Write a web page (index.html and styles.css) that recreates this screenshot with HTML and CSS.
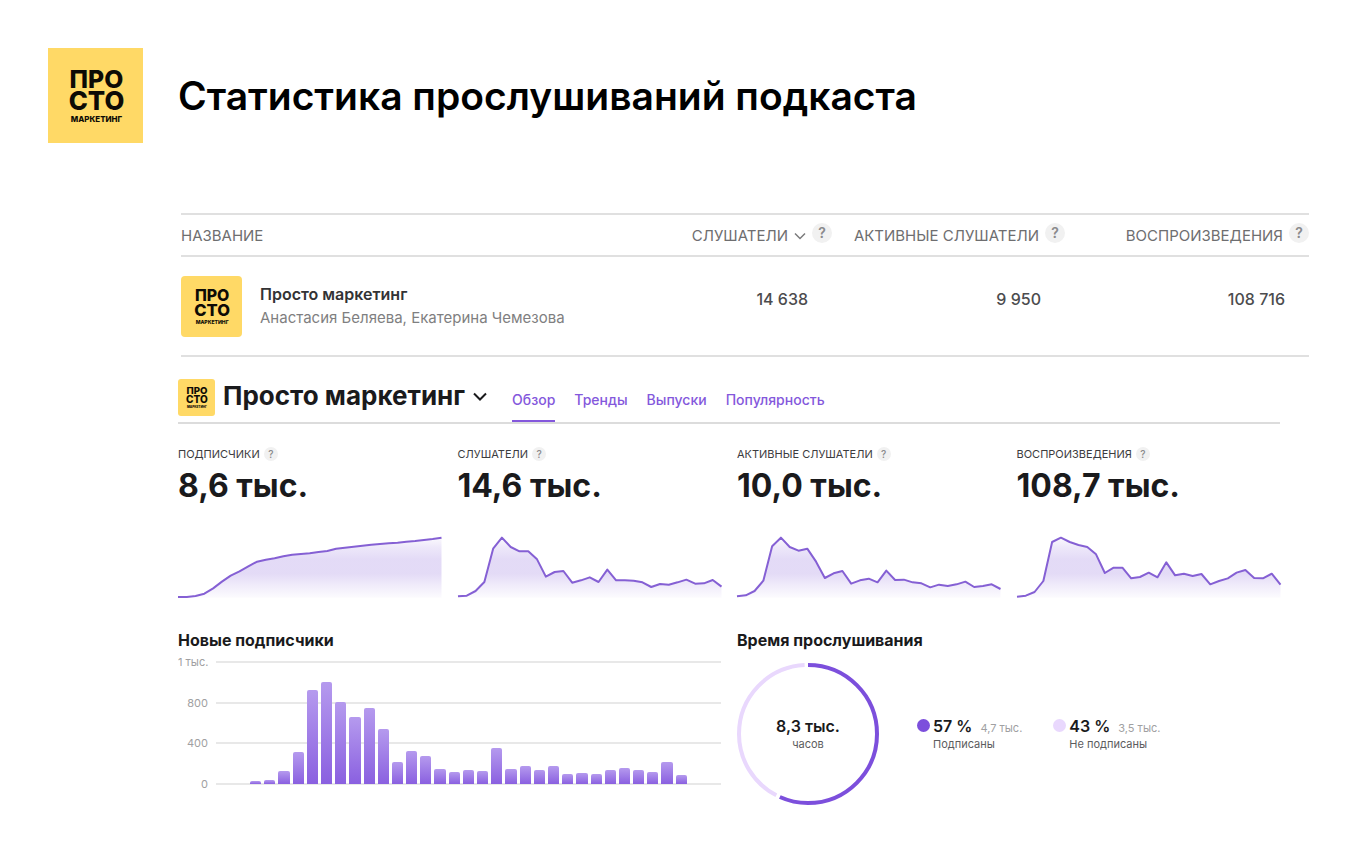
FILE: index.html
```html
<!DOCTYPE html>
<html lang="ru">
<head>
<meta charset="utf-8">
<meta name="viewport" content="width=device-width, initial-scale=1">
<title>Статистика прослушиваний подкаста</title>
<link rel="stylesheet" href="styles.css">
</head>
<body>
<svg class="defs" width="0" height="0" aria-hidden="true">
  <defs>
    <symbol id="cover" viewBox="0 0 96 96">
      <rect width="96" height="96" fill="#ffd966"/>
      <g class="cover-text" text-anchor="middle">
        <text x="49" y="40" font-size="25">ПРО</text>
        <text x="49" y="63" font-size="26">СТО</text>
        <text x="49" y="75" font-size="8">МАРКЕТИНГ</text>
      </g>
    </symbol>
    <linearGradient id="area" gradientUnits="userSpaceOnUse" x1="0" y1="38" x2="0" y2="218">
      <stop offset="0" stop-color="#e2d9f6" stop-opacity="0.15"/>
      <stop offset="0.16" stop-color="#e2d9f6" stop-opacity="0.6"/>
      <stop offset="0.36" stop-color="#e2d9f6" stop-opacity="0.95"/>
      <stop offset="0.6" stop-color="#e2d9f6" stop-opacity="0.95"/>
      <stop offset="0.8" stop-color="#e2d9f6" stop-opacity="0.5"/>
      <stop offset="1" stop-color="#e2d9f6" stop-opacity="0.1"/>
    </linearGradient>
  </defs>
</svg>

<header class="page-header">
  <svg class="cover cover-large" role="img" aria-label="Просто маркетинг"><use href="#cover"/></svg>
  <h1 class="page-title">Статистика прослушиваний подкаста</h1>
</header>

<main class="content">
  <table class="shows">
    <colgroup><col><col class="col-listeners"><col class="col-active"><col class="col-plays"></colgroup>
    <thead>
      <tr>
        <th scope="col">НАЗВАНИЕ</th>
        <th scope="col"><span class="th-inner">СЛУШАТЕЛИ
          <svg class="sort" viewBox="0 0 12 8" aria-hidden="true"><path d="M1 1.5 6 6.5 11 1.5"/></svg>
          <button class="help help-large" type="button" aria-label="Справка: слушатели">?</button></span></th>
        <th scope="col"><span class="th-inner">АКТИВНЫЕ СЛУШАТЕЛИ
          <button class="help help-large" type="button" aria-label="Справка: активные слушатели">?</button></span></th>
        <th scope="col"><span class="th-inner">ВОСПРОИЗВЕДЕНИЯ
          <button class="help help-large" type="button" aria-label="Справка: воспроизведения">?</button></span></th>
      </tr>
    </thead>
    <tbody>
      <tr>
        <td>
          <div class="show">
            <svg class="cover cover-medium" aria-hidden="true"><use href="#cover"/></svg>
            <div>
              <div class="show-name">Просто маркетинг</div>
              <div class="show-authors">Анастасия Беляева, Екатерина Чемезова</div>
            </div>
          </div>
        </td>
        <td class="num">14 638</td>
        <td class="num">9 950</td>
        <td class="num">108 716</td>
      </tr>
    </tbody>
  </table>

  <section class="dashboard">
    <div class="dash-header">
      <svg class="cover cover-small" aria-hidden="true"><use href="#cover"/></svg>
      <h2 class="dash-title">Просто маркетинг</h2>
      <button class="switcher" type="button" aria-label="Выбрать подкаст">
        <svg viewBox="0 0 14 9" aria-hidden="true"><path d="M1 1.5 7 7.5 13 1.5"/></svg>
      </button>
      <nav class="tabs">
        <a class="tab tab-active" href="#overview">Обзор</a>
        <a class="tab" href="#trends">Тренды</a>
        <a class="tab" href="#episodes">Выпуски</a>
        <a class="tab" href="#popularity">Популярность</a>
      </nav>
    </div>

    <div class="stats" id="overview">
      <article class="stat">
        <div class="stat-label">ПОДПИСЧИКИ <button class="help" type="button" aria-label="Справка: подписчики">?</button></div>
        <div class="stat-value">8,6 тыс.</div>
        <svg class="spark" viewBox="0 24 300 198" preserveAspectRatio="none" data-values="216,216,213,206,190,170,152,139,124,110,104,100,94,89,87,85,81,78,71,68,65,62,59,57,55,53,50,48,45,42,38"></svg>
      </article>
      <article class="stat">
        <div class="stat-label">СЛУШАТЕЛИ <button class="help" type="button" aria-label="Справка: слушатели">?</button></div>
        <div class="stat-value">14,6 тыс.</div>
        <svg class="spark" viewBox="0 24 300 198" preserveAspectRatio="none" data-values="214,212,198,171,71,38,66,79,79,103,155,141,138,173,166,157,171,134,166,166,167,172,186,177,179,172,164,176,175,165,185"></svg>
      </article>
      <article class="stat">
        <div class="stat-label">АКТИВНЫЕ СЛУШАТЕЛИ <button class="help" type="button" aria-label="Справка: активные слушатели">?</button></div>
        <div class="stat-value">10,0 тыс.</div>
        <svg class="spark" viewBox="0 24 300 198" preserveAspectRatio="none" data-values="214,211,198,167,64,38,66,77,71,110,159,145,138,176,166,161,172,137,165,164,172,175,187,179,183,178,170,186,183,178,192"></svg>
      </article>
      <article class="stat">
        <div class="stat-label">ВОСПРОИЗВЕДЕНИЯ <button class="help" type="button" aria-label="Справка: воспроизведения">?</button></div>
        <div class="stat-value">108,7 тыс.</div>
        <svg class="spark" viewBox="0 24 300 198" preserveAspectRatio="none" data-values="215,212,201,168,51,38,51,60,66,88,144,128,128,160,156,143,157,112,151,146,153,147,178,168,160,143,135,159,160,146,179"></svg>
      </article>
    </div>

    <div class="charts">
      <section>
        <h3 class="chart-title">Новые подписчики</h3>
        <div class="plot">
          <div class="axis"><span class="axis-label">1 тыс.</span></div>
          <div class="axis"><span class="axis-label">800</span></div>
          <div class="axis"><span class="axis-label">400</span></div>
          <div class="axis"><span class="axis-label">0</span></div>
          <div class="bars" data-values="3,4,13,32,94,102,82,67,76,55,22,33,28,15,12,14,13,36,15,18,14,18,10,11,10,14,16,14,12,22,9"></div>
        </div>
      </section>
      <section>
        <h3 class="chart-title">Время прослушивания</h3>
        <div class="time">
          <div class="donut">
            <svg class="donut-ring" viewBox="0 0 142 142" aria-hidden="true">
              <g fill="none" stroke-width="4" transform="rotate(-90 71 71)">
                <circle cx="71" cy="71" r="69" pathLength="1000" stroke="#7c4fdc" stroke-dasharray="567 433"/>
                <circle cx="71" cy="71" r="69" pathLength="1000" stroke="#e9d8fd" stroke-dasharray="416 584" stroke-dashoffset="-576"/>
              </g>
            </svg>
            <div class="donut-text">
              <div class="donut-value">8,3 тыс.</div>
              <div class="caption">часов</div>
            </div>
          </div>
          <ul class="legend">
            <li class="legend-item">
              <span class="dot dot-subscribed"></span>
              <div>
                <div class="legend-row"><span class="legend-value">57 %</span><span class="legend-count">4,7 тыс.</span></div>
                <div class="caption">Подписаны</div>
              </div>
            </li>
            <li class="legend-item">
              <span class="dot dot-other"></span>
              <div>
                <div class="legend-row"><span class="legend-value">43 %</span><span class="legend-count">3,5 тыс.</span></div>
                <div class="caption">Не подписаны</div>
              </div>
            </li>
          </ul>
        </div>
      </section>
    </div>
  </section>
</main>
<script src="charts.js"></script>
</body>
</html>
```
FILE: styles.css
```css
* {
  box-sizing: border-box;
}

body {
  margin: 0;
  padding: 48px 51px 48px 48px;
  background: #fff;
  color: #1a1a1c;
  font-family: Inter, "Liberation Sans", sans-serif;
}

h1, h2, h3, ul {
  margin: 0;
  padding: 0;
}

button {
  border: 0;
  padding: 0;
  background: none;
  font-family: inherit;
  cursor: pointer;
}

.defs {
  position: absolute;
}

.page-header {
  display: flex;
  align-items: center;
  gap: 35px;
}

.page-title {
  color: #000;
  font-size: 39px;
  font-weight: 600;
  line-height: 48px;
}

.cover {
  display: block;
  flex: none;
}

.cover-text {
  fill: #0d0b05;
  font-family: Inter, sans-serif;
  font-weight: 800;
}

.cover-large {
  width: 95px;
  height: 95px;
}

.cover-medium {
  width: 61px;
  height: 61px;
  border-radius: 4px;
}

.cover-small {
  width: 37px;
  height: 37px;
  border-radius: 3px;
}

.content {
  margin: 70px 0 0 130px;
}

.shows {
  width: calc(100% - 3px);
  margin-left: 3px;
  border-collapse: collapse;
  table-layout: fixed;
  border-top: 2px solid #e0e0e0;
}

.col-listeners { width: 200px; }
.col-active { width: 233px; }
.col-plays { width: 244px; }

.shows tr {
  border-bottom: 2px solid #e0e0e0;
}

.shows th {
  height: 42px;
  padding: 2px 0 0;
  color: #6e6e70;
  font-size: 15px;
  font-weight: 400;
  line-height: 20px;
  text-align: left;
  white-space: nowrap;
}

.th-inner {
  display: flex;
  align-items: center;
  justify-content: flex-end;
  gap: 6px;
}

.sort {
  width: 12px;
  height: 8px;
  fill: none;
  stroke: #7a7a7c;
  stroke-width: 1.5;
}

.help {
  display: inline-flex;
  align-items: center;
  justify-content: center;
  width: 14px;
  height: 14px;
  border-radius: 50%;
  background: #f1f1f1;
  color: #8a8a8c;
  font-size: 10px;
  font-weight: 500;
  line-height: 14px;
}

.help-large {
  width: 20px;
  height: 20px;
  margin-bottom: 6px;
  font-size: 14px;
  font-weight: 600;
}

.shows td {
  height: 100px;
  padding: 0;
}

.shows .num {
  padding: 0 24px 14px 0;
  color: #4c4c4e;
  font-size: 16px;
  font-weight: 500;
  text-align: right;
}

.show {
  display: flex;
  align-items: center;
  gap: 18px;
}

.show-name {
  color: #333335;
  font-size: 16px;
  font-weight: 600;
  line-height: 24px;
}

.show-authors {
  color: #7f7f81;
  font-size: 15px;
  line-height: 24px;
}

.dashboard {
  margin: 22px 29px 0 0;
}

.dash-header {
  display: flex;
  align-items: flex-start;
  height: 45px;
  border-bottom: 2px solid #dcdcdc;
}

.dash-title {
  margin: 0 8px;
  font-size: 26px;
  font-weight: 700;
  line-height: 34px;
}

.switcher {
  width: 14px;
  height: 34px;
}

.switcher svg {
  display: block;
  width: 14px;
  height: 9px;
  fill: none;
  stroke: #1a1a1c;
  stroke-width: 2;
}

.tabs {
  display: flex;
  align-self: stretch;
  gap: 19px;
  margin-left: 25px;
}

.tab {
  height: 43px;
  padding-top: 11px;
  color: #8458dc;
  font-size: 14px;
  font-weight: 500;
  line-height: 20px;
  text-decoration: none;
}

.tab-active {
  border-bottom: 2px solid #8458dc;
}

.stats {
  display: grid;
  grid-template-columns: repeat(4, 1fr);
  gap: 16px;
  margin-top: 22px;
}

.stat-label {
  display: flex;
  align-items: center;
  gap: 4px;
  height: 16px;
  color: #3c3c3e;
  font-size: 11px;
  font-weight: 400;
  white-space: nowrap;
}

.stat-value {
  margin-top: 4px;
  font-size: 32px;
  font-weight: 700;
  line-height: 40px;
}

.spark {
  display: block;
  width: 100%;
  height: 66px;
  margin-top: 27px;
  overflow: visible;
}

.spark-area {
  fill: url(#area);
}

.spark-line {
  fill: none;
  stroke: #8560d4;
  stroke-width: 2;
  stroke-linejoin: round;
  vector-effect: non-scaling-stroke;
}

.charts {
  display: grid;
  grid-template-columns: 1fr 1fr;
  gap: 16px;
  margin-top: 31px;
}

.chart-title {
  font-size: 16px;
  font-weight: 700;
  line-height: 20px;
}

.plot {
  position: relative;
  display: flex;
  flex-direction: column;
  justify-content: space-between;
  height: 142px;
  margin-top: 2px;
}

.axis {
  display: flex;
  align-items: center;
  gap: 8px;
  height: 20px;
}

.axis::after {
  content: "";
  flex: 1;
  height: 2px;
  background: #e8e8e8;
}

.axis-label {
  width: 30px;
  color: #a0a0a2;
  font-size: 11px;
  line-height: 20px;
  text-align: right;
  white-space: nowrap;
}

.bars {
  position: absolute;
  inset: 0 34px 10px 72px;
  display: flex;
  align-items: flex-end;
  gap: 3px;
}

.bar {
  flex: 1;
  border-radius: 2px 2px 0 0;
  background: linear-gradient(#b59aee, #8a60e0);
}

.time {
  display: flex;
  align-items: center;
  gap: 38px;
  margin-top: 13px;
}

.donut {
  display: grid;
  place-items: center;
  flex: none;
}

.donut-ring,
.donut-text {
  grid-area: 1 / 1;
}

.donut-ring {
  width: 142px;
  height: 142px;
}

.donut-text {
  text-align: center;
}

.donut-value {
  font-size: 16px;
  font-weight: 600;
  line-height: 20px;
}

.caption {
  color: #5c5c5e;
  font-size: 11px;
  line-height: 16px;
}

.legend {
  display: flex;
  gap: 31px;
  list-style: none;
}

.legend-item {
  display: flex;
  gap: 3px;
}

.dot {
  width: 13px;
  height: 13px;
  margin-top: 3px;
  border-radius: 50%;
}

.dot-subscribed { background: #7c4fdc; }
.dot-other { background: #e9d8fd; }

.legend-row {
  display: flex;
  align-items: baseline;
  gap: 8px;
  white-space: nowrap;
}

.legend-value {
  font-size: 16px;
  font-weight: 600;
  line-height: 20px;
}

.legend-count {
  color: #a0a0a2;
  font-size: 11px;
}
```
FILE: charts.js
```js
const SVG_NS = "http://www.w3.org/2000/svg";

const readValues = (node) => node.dataset.values.split(",").map(Number);

const addShape = (svg, name, className, points) => {
  const shape = document.createElementNS(SVG_NS, name);
  shape.setAttribute("class", className);
  shape.setAttribute("points", points);
  svg.append(shape);
};

document.querySelectorAll(".spark").forEach((svg) => {
  const line = readValues(svg).map((y, i) => `${i * 10},${y}`).join(" ");
  addShape(svg, "polygon", "spark-area", `0,218 ${line} 300,218`);
  addShape(svg, "polyline", "spark-line", line);
});

document.querySelectorAll(".bars").forEach((bars) => {
  readValues(bars).forEach((height) => {
    const bar = document.createElement("span");
    bar.className = "bar";
    bar.style.height = `${height}px`;
    bars.append(bar);
  });
});
```
